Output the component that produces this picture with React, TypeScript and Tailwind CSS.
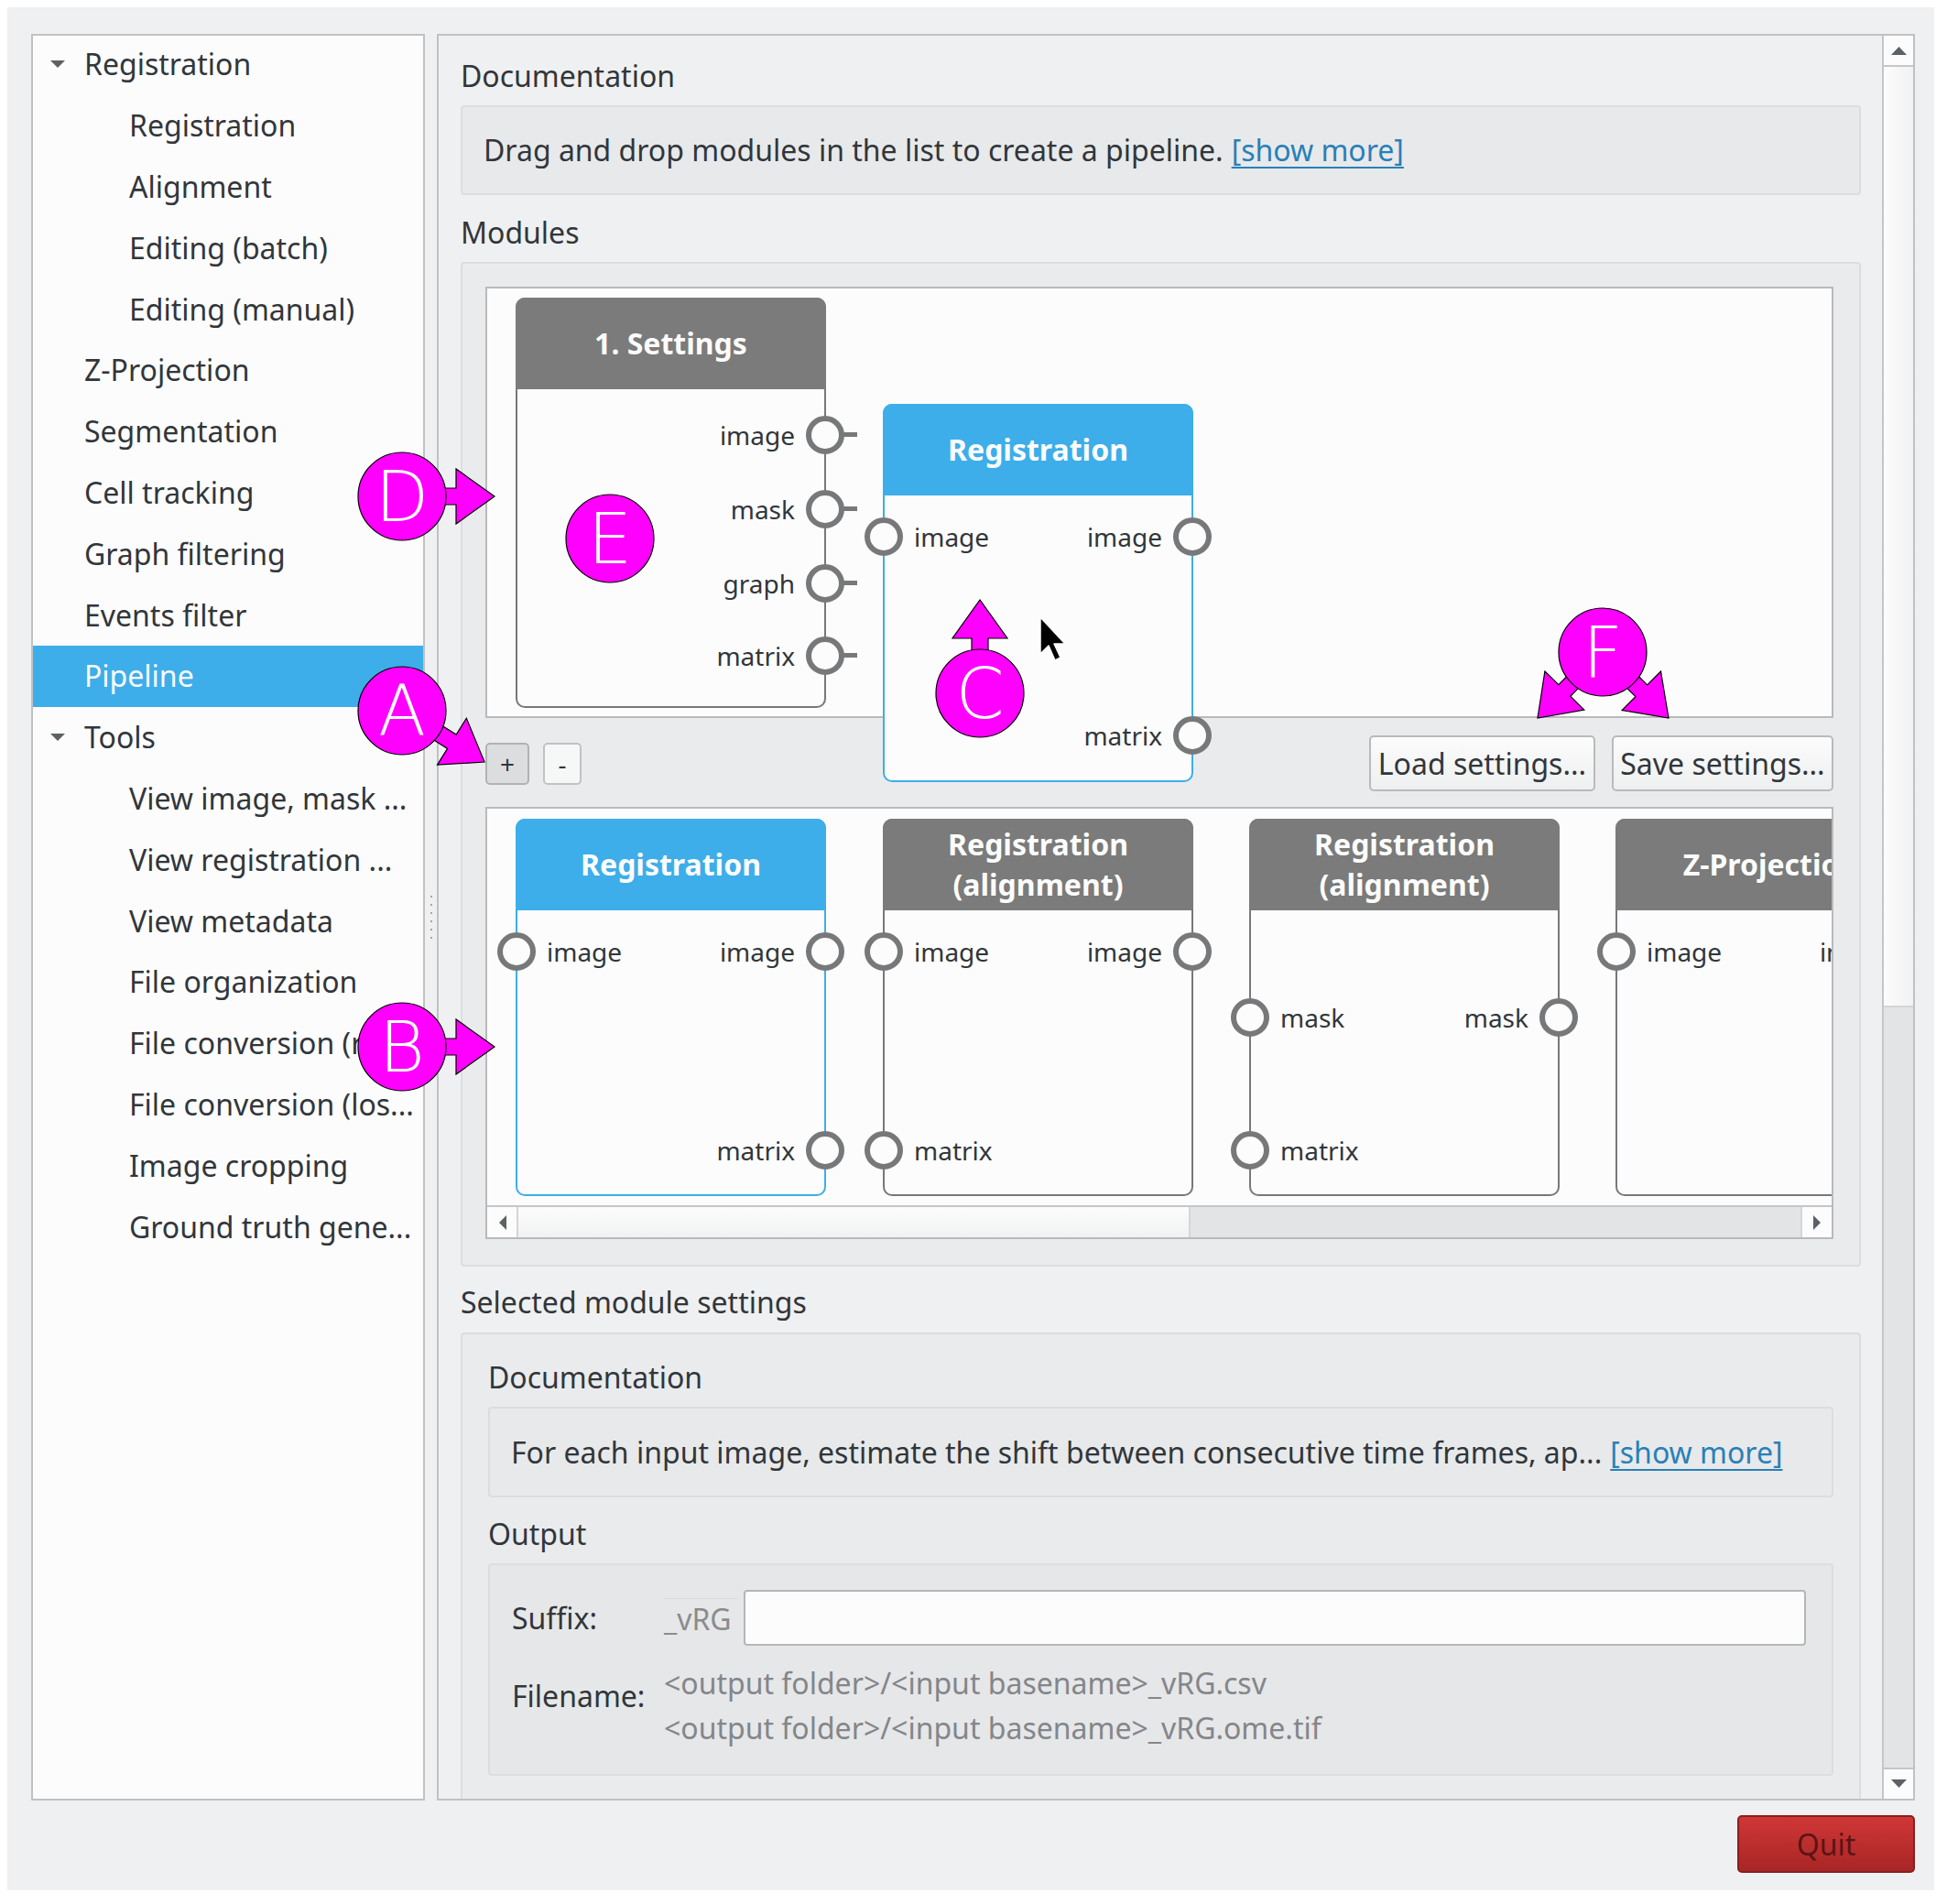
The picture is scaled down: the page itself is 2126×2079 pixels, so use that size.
import React from "react";

type PortSpec = { label: string; y: number; side: "in" | "out"; stub?: boolean };

type NodeSpec = {
  title: string[];
  x: number;
  y: number;
  h: number;
  active?: boolean;
  ports: PortSpec[];
};

const sidebarItems: { label: string; level: 0 | 1; open?: boolean; selected?: boolean }[] = [
  { label: "Registration", level: 0, open: true },
  { label: "Registration", level: 1 },
  { label: "Alignment", level: 1 },
  { label: "Editing (batch)", level: 1 },
  { label: "Editing (manual)", level: 1 },
  { label: "Z-Projection", level: 0 },
  { label: "Segmentation", level: 0 },
  { label: "Cell tracking", level: 0 },
  { label: "Graph filtering", level: 0 },
  { label: "Events filter", level: 0 },
  { label: "Pipeline", level: 0, selected: true },
  { label: "Tools", level: 0, open: true },
  { label: "View image, mask ...", level: 1 },
  { label: "View registration ...", level: 1 },
  { label: "View metadata", level: 1 },
  { label: "File organization", level: 1 },
  { label: "File conversion (r", level: 1 },
  { label: "File conversion (los...", level: 1 },
  { label: "Image cropping", level: 1 },
  { label: "Ground truth gene...", level: 1 },
];

const pipelineNodes: NodeSpec[] = [
  {
    title: ["1. Settings"],
    x: 31,
    y: 10,
    h: 448,
    ports: [
      { label: "image", y: 150, side: "out", stub: true },
      { label: "mask", y: 231, side: "out", stub: true },
      { label: "graph", y: 312, side: "out", stub: true },
      { label: "matrix", y: 391, side: "out", stub: true },
    ],
  },
  {
    title: ["Registration"],
    x: 432,
    y: 126,
    h: 413,
    active: true,
    ports: [
      { label: "image", y: 145, side: "in" },
      { label: "image", y: 145, side: "out" },
      { label: "matrix", y: 362, side: "out" },
    ],
  },
];

const libraryNodes: NodeSpec[] = [
  {
    title: ["Registration"],
    x: 31,
    y: 11,
    h: 412,
    active: true,
    ports: [
      { label: "image", y: 145, side: "in" },
      { label: "image", y: 145, side: "out" },
      { label: "matrix", y: 362, side: "out" },
    ],
  },
  {
    title: ["Registration", "(alignment)"],
    x: 432,
    y: 11,
    h: 412,
    ports: [
      { label: "image", y: 145, side: "in" },
      { label: "image", y: 145, side: "out" },
      { label: "matrix", y: 362, side: "in" },
    ],
  },
  {
    title: ["Registration", "(alignment)"],
    x: 832,
    y: 11,
    h: 412,
    ports: [
      { label: "mask", y: 217, side: "in" },
      { label: "mask", y: 217, side: "out" },
      { label: "matrix", y: 362, side: "in" },
    ],
  },
  {
    title: ["Z-Projection"],
    x: 1232,
    y: 11,
    h: 412,
    ports: [
      { label: "image", y: 145, side: "in" },
      { label: "image", y: 145, side: "out" },
    ],
  },
];

function Port({ port }: { port: PortSpec }) {
  const isIn = port.side === "in";
  return (
    <>
      <div
        className={`absolute h-[42px] w-[42px] rounded-full border-[6px] border-[#77787a] bg-[#fcfcfc] ${
          isIn ? "left-[-22px]" : "right-[-22px]"
        }`}
        style={{ top: port.y - 23 }}
      />
      {port.stub ? (
        <div className="absolute right-[-36px] h-[5px] w-[15px] bg-[#77787a]" style={{ top: port.y - 5 }} />
      ) : null}
      <div
        className={`absolute flex h-[40px] items-center whitespace-nowrap text-[28px] text-[#31363b] ${
          isIn ? "left-[32px]" : "right-[32px]"
        }`}
        style={{ top: port.y - 22 }}
      >
        {port.label}
      </div>
    </>
  );
}

function Node({ node }: { node: NodeSpec }) {
  const border = node.active ? "border-[#3daee9]" : "border-[#77787a]";
  const header = node.active ? "bg-[#3daee9]" : "bg-[#7a7b7a]";
  return (
    <div
      className={`absolute w-[339px] rounded-[10px] border-2 ${border} bg-[#fcfcfc]`}
      style={{ left: node.x, top: node.y, height: node.h }}
    >
      <div
        className={`-mx-[2px] -mt-[2px] flex h-[100px] flex-col items-center justify-center rounded-t-[10px] ${header} text-[32px] font-bold leading-[44px] text-[#fcfcfc]`}
      >
        {node.title.map((line, i) => (
          <div key={i} className="whitespace-nowrap">
            {line}
          </div>
        ))}
      </div>
      {node.ports.map((port, i) => (
        <Port key={i} port={port} />
      ))}
    </div>
  );
}

function TreeArrow() {
  return (
    <svg width="16" height="9" viewBox="0 0 16 9" className="absolute left-[19px]">
      <polygon points="0,0 16,0 8,8" fill="#5d6165" />
    </svg>
  );
}

function Sidebar() {
  return (
    <div className="h-[1929px] w-[430px] shrink-0 overflow-hidden border-2 border-[#bfc1c3] bg-[#fcfcfc]">
      <div className="-mt-[2px]">
        {sidebarItems.map((item, i) => (
          <div
            key={i}
            className={`relative flex h-[66.8px] items-center whitespace-nowrap text-[32px] ${
              item.selected ? "bg-[#3daee9] text-[#fcfcfc]" : "text-[#31363b]"
            } ${item.level === 0 ? "pl-[56px]" : "pl-[105px]"}`}
          >
            {item.open ? <TreeArrow /> : null}
            {item.label}
          </div>
        ))}
      </div>
    </div>
  );
}

function Label({ children }: { children: React.ReactNode }) {
  return <div className="flex h-[44px] items-center text-[32px] text-[#31363b]">{children}</div>;
}

function DocBox({ children, h }: { children: React.ReactNode; h: string }) {
  return (
    <div
      className={`flex ${h} items-center whitespace-nowrap rounded-[4px] border-2 border-[#dcddde] bg-[#e8e9ea] pl-[23px] text-[32px] text-[#31363b]`}
    >
      {children}
    </div>
  );
}

function Link({ children }: { children: React.ReactNode }) {
  return <span className="ml-[9px] text-[#2980b9] underline decoration-2 underline-offset-[6px]">{children}</span>;
}

function Button({ children, className }: { children: React.ReactNode; className: string }) {
  return (
    <div
      className={`flex items-center justify-center whitespace-nowrap rounded-[5px] border-2 border-[#b8babc] bg-gradient-to-b from-[#fcfcfc] to-[#eeeff0] text-[32px] text-[#31363b] ${className}`}
    >
      {children}
    </div>
  );
}

function HScrollbar() {
  return (
    <div className="flex h-[35px] shrink-0 border-t-2 border-[#c4c6c8]">
      <div className="flex w-[34px] items-center justify-center border-r-2 border-[#d4d5d6] bg-[#fcfcfc]">
        <svg width="9" height="16" viewBox="0 0 9 16">
          <polygon points="9,0 9,16 1,8" fill="#5d6165" />
        </svg>
      </div>
      <div className="w-[732px] bg-gradient-to-b from-[#fcfcfc] to-[#f1f2f3]" />
      <div className="flex-1 border-l-2 border-[#d4d5d6] bg-[#e3e4e5]" />
      <div className="flex w-[34px] items-center justify-center border-l-2 border-[#d4d5d6] bg-[#fcfcfc]">
        <svg width="9" height="16" viewBox="0 0 9 16">
          <polygon points="0,0 0,16 8,8" fill="#5d6165" />
        </svg>
      </div>
    </div>
  );
}

function VScrollbar() {
  return (
    <div className="flex w-[34px] shrink-0 flex-col border-l-2 border-[#c4c6c8]">
      <div className="flex h-[34px] items-center justify-center border-b-2 border-[#c4c6c8] bg-[#fcfcfc]">
        <svg width="17" height="10" viewBox="0 0 17 10">
          <polygon points="0,10 17,10 8.5,1" fill="#5d6165" />
        </svg>
      </div>
      <div className="h-[1025px] bg-gradient-to-r from-[#fcfcfc] to-[#f1f2f3]" />
      <div className="flex-1 border-t-2 border-[#d4d5d6] bg-[#e3e4e5]" />
      <div className="flex h-[34px] items-center justify-center border-t-2 border-[#c4c6c8] bg-[#fcfcfc]">
        <svg width="17" height="10" viewBox="0 0 17 10">
          <polygon points="0,0 17,0 8.5,9" fill="#5d6165" />
        </svg>
      </div>
    </div>
  );
}

function arrow(sx: number, sy: number, tx: number, ty: number, headLen = 42, headHalf = 30, stemHalf = 9) {
  const len = Math.hypot(tx - sx, ty - sy);
  const ux = (tx - sx) / len;
  const uy = (ty - sy) / len;
  const nx = -uy;
  const ny = ux;
  const bx = tx - ux * headLen;
  const by = ty - uy * headLen;
  const pts = [
    [sx + nx * stemHalf, sy + ny * stemHalf],
    [bx + nx * stemHalf, by + ny * stemHalf],
    [bx + nx * headHalf, by + ny * headHalf],
    [tx, ty],
    [bx - nx * headHalf, by - ny * headHalf],
    [bx - nx * stemHalf, by - ny * stemHalf],
    [sx - nx * stemHalf, sy - ny * stemHalf],
  ];
  return pts.map(p => `${p[0].toFixed(1)},${p[1].toFixed(1)}`).join(" ");
}

const markers = [
  { letter: "D", cx: 439, cy: 542, arrows: [[470, 542, 540, 542]] },
  { letter: "E", cx: 666, cy: 588, arrows: [] },
  { letter: "A", cx: 439, cy: 776, arrows: [[465, 792, 529, 832]] },
  { letter: "B", cx: 439, cy: 1143, arrows: [[470, 1143, 540, 1143]] },
  { letter: "C", cx: 1070, cy: 757, arrows: [[1070, 725, 1070, 655]] },
  {
    letter: "F",
    cx: 1750,
    cy: 712,
    arrows: [
      [1725, 737, 1679, 784],
      [1775, 737, 1822, 784],
    ],
  },
];

function Annotations() {
  return (
    <svg className="pointer-events-none absolute left-0 top-0" width="2126" height="2079" viewBox="0 0 2126 2079">
      {/* mouse pointer */}
      <polygon
        points="1136,674 1136,714 1145,705 1152,721 1158,718 1151,703 1163,703"
        fill="#000"
        stroke="#fcfcfc"
        strokeWidth="1.5"
        strokeLinejoin="round"
      />
      {markers.map(m => (
        <g key={m.letter}>
          {m.arrows.map((a, i) => (
            <polygon key={i} points={arrow(a[0], a[1], a[2], a[3])} fill="#ff00ff" stroke="#000" strokeWidth="1.2" />
          ))}
          <circle cx={m.cx} cy={m.cy} r="48" fill="#ff00ff" stroke="#000" strokeWidth="1.2" />
          <text
            x={m.cx}
            y={m.cy + 27}
            textAnchor="middle"
            fill="#fff"
            fontSize="76"
            fontWeight="200"
            fontFamily="'DejaVu Sans', 'Liberation Sans', sans-serif"
          >
            {m.letter}
          </text>
        </g>
      ))}
    </svg>
  );
}

export default function App() {
  return (
    <div className="relative h-[2079px] w-[2126px] bg-white pl-[8px] pt-[8px] font-['Noto_Sans',sans-serif]">
      <div className="flex h-[2056px] w-[2104px] flex-col bg-[#eff0f1] pl-[26px] pr-[21px] pt-[29px]">
        <div className="flex h-[1929px]">
          <Sidebar />
          <div className="flex w-[13px] shrink-0 items-center justify-center">
            <div className="flex flex-col gap-[7px]">
              {[0, 1, 2, 3, 4, 5].map(i => (
                <div key={i} className="h-[2px] w-[2px] bg-[#a3a5a7]" />
              ))}
            </div>
          </div>
          <div className="flex w-[1614px] border-2 border-[#bfc1c3]">
            <div className="flex-1 overflow-hidden pl-[24px] pr-[23px] pt-[22px]">
              <Label>Documentation</Label>
              <div className="mt-[10px]">
                <DocBox h="h-[98px]">
                  Drag and drop modules in the list to create a pipeline.<Link>[show more]</Link>
                </DocBox>
              </div>
              <div className="mt-[19px]">
                <Label>Modules</Label>
              </div>
              <div className="mt-[10px] h-[1097px] rounded-[4px] border-2 border-[#dcddde] bg-[#eaebec] pl-[25px] pr-[28px] pt-[25px]">
                <div className="relative h-[471px] border-2 border-[#b8babc] bg-[#fcfcfc]">
                  {pipelineNodes.map((n, i) => (
                    <Node key={i} node={n} />
                  ))}
                </div>
                <div className="mt-[19px] flex h-[61px] items-center justify-between">
                  <div className="flex gap-[15px]">
                    <div className="flex h-[46px] w-[48px] items-center justify-center rounded-[5px] border-2 border-[#b0b2b4] bg-[#dcdddf] text-[28px] text-[#31363b]">
                      +
                    </div>
                    <div className="flex h-[46px] w-[42px] items-center justify-center rounded-[5px] border-2 border-[#c0c2c4] bg-[#f6f7f7] text-[28px] text-[#31363b]">
                      -
                    </div>
                  </div>
                  <div className="flex gap-[18px]">
                    <Button className="h-[61px] w-[247px]">Load settings...</Button>
                    <Button className="h-[61px] w-[242px]">Save settings...</Button>
                  </div>
                </div>
                <div className="mt-[17px] flex h-[472px] flex-col border-2 border-[#b8babc] bg-[#fcfcfc]">
                  <div className="relative flex-1 overflow-hidden">
                    {libraryNodes.map((n, i) => (
                      <Node key={i} node={n} />
                    ))}
                  </div>
                  <HScrollbar />
                </div>
              </div>
              <div className="mt-[17px]">
                <Label>Selected module settings</Label>
              </div>
              <div className="mt-[11px] h-[560px] rounded-[4px] border-2 border-[#dcddde] bg-[#eaebec] pl-[28px] pr-[28px] pt-[25px]">
                <Label>Documentation</Label>
                <div className="mt-[10px]">
                  <DocBox h="h-[99px]">
                    For each input image, estimate the shift between consecutive time frames, ap...
                    <Link>[show more]</Link>
                  </DocBox>
                </div>
                <div className="mt-[18px]">
                  <Label>Output</Label>
                </div>
                <div className="mt-[10px] h-[232px] rounded-[4px] border-2 border-[#dcddde] bg-[#e6e7e8] pl-[24px] pr-[28px] pt-[27px] text-[32px] text-[#31363b]">
                  <div className="flex h-[61px] items-center">
                    <div className="w-[166px]">Suffix:</div>
                    <div className="flex h-[61px] w-[87px] items-center">
                      <div className="h-[44px] w-[80px] border-t border-[#d8d9da] leading-[44px] text-[#8a8c8e]">_vRG</div>
                    </div>
                    <div className="h-[61px] flex-1 rounded-[4px] border-2 border-[#b4b6b8] bg-[#fcfcfc]" />
                  </div>
                  <div className="mt-[16px] flex">
                    <div className="mt-[15px] w-[166px]">Filename:</div>
                    <div className="leading-[49px] text-[#84868a]">
                      <div>&lt;output folder&gt;/&lt;input basename&gt;_vRG.csv</div>
                      <div>&lt;output folder&gt;/&lt;input basename&gt;_vRG.ome.tif</div>
                    </div>
                  </div>
                </div>
              </div>
            </div>
            <VScrollbar />
          </div>
        </div>
        <div className="mt-[16px] flex justify-end">
          <div className="flex h-[63px] w-[194px] items-center justify-center rounded-[5px] border-2 border-[#8b1e1e] bg-gradient-to-b from-[#d03636] to-[#a82626] text-[32px] text-[#5c1414]">
            Quit
          </div>
        </div>
      </div>
      <Annotations />
    </div>
  );
}
